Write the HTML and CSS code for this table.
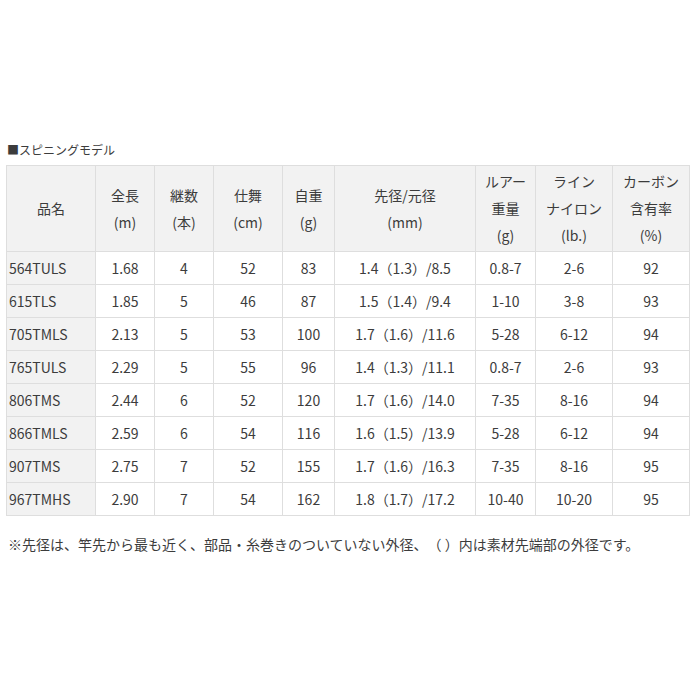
FILE: index.html
```html
<!DOCTYPE html>
<html lang="ja">
<head>
<meta charset="utf-8">
<link rel="stylesheet" href="styles.css">
</head>
<body>
<div class="page">
  <p class="title">■スピニングモデル</p>
  <table class="spec">
    <colgroup>
      <col class="c-name"><col class="c-len"><col class="c-pcs"><col class="c-close"><col class="c-wt"><col class="c-dia"><col class="c-lure"><col class="c-line"><col class="c-carbon">
    </colgroup>
    <thead>
      <tr>
        <th>品名</th>
        <th>全長<br>(m)</th>
        <th>継数<br>(本)</th>
        <th>仕舞<br>(cm)</th>
        <th>自重<br>(g)</th>
        <th>先径/元径<br>(mm)</th>
        <th>ルアー<br>重量<br>(g)</th>
        <th>ライン<br>ナイロン<br>(lb.)</th>
        <th>カーボン<br>含有率<br>(%)</th>
      </tr>
    </thead>
    <tbody>
      <tr><th>564TULS</th><td>1.68</td><td>4</td><td>52</td><td>83</td><td>1.4（1.3）/8.5</td><td>0.8-7</td><td>2-6</td><td>92</td></tr>
      <tr><th>615TLS</th><td>1.85</td><td>5</td><td>46</td><td>87</td><td>1.5（1.4）/9.4</td><td>1-10</td><td>3-8</td><td>93</td></tr>
      <tr><th>705TMLS</th><td>2.13</td><td>5</td><td>53</td><td>100</td><td>1.7（1.6）/11.6</td><td>5-28</td><td>6-12</td><td>94</td></tr>
      <tr><th>765TULS</th><td>2.29</td><td>5</td><td>55</td><td>96</td><td>1.4（1.3）/11.1</td><td>0.8-7</td><td>2-6</td><td>93</td></tr>
      <tr><th>806TMS</th><td>2.44</td><td>6</td><td>52</td><td>120</td><td>1.7（1.6）/14.0</td><td>7-35</td><td>8-16</td><td>94</td></tr>
      <tr><th>866TMLS</th><td>2.59</td><td>6</td><td>54</td><td>116</td><td>1.6（1.5）/13.9</td><td>5-28</td><td>6-12</td><td>94</td></tr>
      <tr><th>907TMS</th><td>2.75</td><td>7</td><td>52</td><td>155</td><td>1.7（1.6）/16.3</td><td>7-35</td><td>8-16</td><td>95</td></tr>
      <tr><th>967TMHS</th><td>2.90</td><td>7</td><td>54</td><td>162</td><td>1.8（1.7）/17.2</td><td>10-40</td><td>10-20</td><td>95</td></tr>
    </tbody>
  </table>
  <p class="note">※先径は、竿先から最も近く、部品・糸巻きのついていない外径、（ ）内は素材先端部の外径です。</p>
</div>
</body>
</html>
```

FILE: styles.css
```css
html, body {
  margin: 0;
  padding: 0;
  background: #ffffff;
}
body {
  font-family: "Noto Sans CJK JP", "Noto Sans", sans-serif;
  color: #3c3c3c;
  text-spacing-trim: space-all;
}
.page {
  padding: 140px 0 0 6px;
}
.title {
  margin: 0 0 5px 1px;
  font-size: 12px;
  line-height: 20px;
  height: 20px;
}
.spec {
  border-collapse: collapse;
  table-layout: fixed;
  width: 683px;
  font-size: 14px;
}
.c-name { width: 89px; }
.c-len { width: 59px; }
.c-pcs { width: 59px; }
.c-close { width: 69px; }
.c-wt { width: 52px; }
.c-dia { width: 141px; }
.c-lure { width: 60px; }
.c-line { width: 77px; }
.c-carbon { width: 77px; }
.spec th, .spec td {
  border: 1px solid #dedede;
  padding: 0;
  font-weight: normal;
  text-align: center;
  vertical-align: middle;
}
.spec thead th {
  background: #f2f2f2;
  height: 85px;
  line-height: 27px;
}
.spec tbody tr {
  height: 33px;
}
.spec tbody th {
  background: #f2f2f2;
  text-align: left;
  padding-left: 2px;
}
.note {
  margin: 18px 0 0 2px;
  font-size: 14px;
  line-height: 20px;
}
```
